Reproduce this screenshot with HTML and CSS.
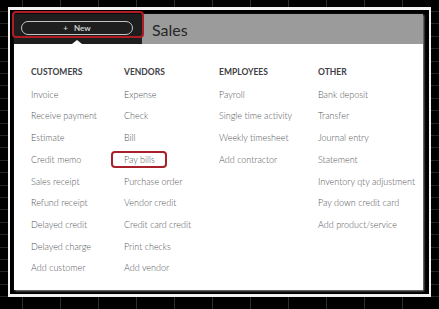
FILE: index.html
```html
<!DOCTYPE html>
<html>
<head>
    <meta charset="utf-8">
    <title>Sales - New</title>
    <link rel="stylesheet" href="styles.css">
</head>
<body>
    <div class="frame">
        <div class="screen">
            <div class="topbar">
                <div class="new-area">
                    <div class="new-pill"><span class="plus">+</span> New</div>
                    <div class="new-mark"></div>
                    <div class="caret"></div>
                </div>
                <div class="page-title">Sales</div>
            </div>

            <div class="menu">
                <div class="col">
                    <h3>CUSTOMERS</h3>
                    <a>Invoice</a>
                    <a>Receive payment</a>
                    <a>Estimate</a>
                    <a>Credit memo</a>
                    <a>Sales receipt</a>
                    <a>Refund receipt</a>
                    <a>Delayed credit</a>
                    <a>Delayed charge</a>
                    <a>Add customer</a>
                </div>
                <div class="col">
                    <h3>VENDORS</h3>
                    <a>Expense</a>
                    <a>Check</a>
                    <a>Bill</a>
                    <a><span class="marked">Pay bills</span></a>
                    <a>Purchase order</a>
                    <a>Vendor credit</a>
                    <a>Credit card credit</a>
                    <a>Print checks</a>
                    <a>Add vendor</a>
                </div>
                <div class="col">
                    <h3>EMPLOYEES</h3>
                    <a>Payroll</a>
                    <a>Single time activity</a>
                    <a>Weekly timesheet</a>
                    <a>Add contractor</a>
                </div>
                <div class="col">
                    <h3>OTHER</h3>
                    <a>Bank deposit</a>
                    <a>Transfer</a>
                    <a>Journal entry</a>
                    <a>Statement</a>
                    <a>Inventory qty adjustment</a>
                    <a>Pay down credit card</a>
                    <a>Add product/service</a>
                </div>
            </div>
        </div>
    </div>
</body>
</html>
```

FILE: styles.css
```css
html, body {
    margin: 0;
    height: 100%;
}

body {
    padding: 7px 8px;
    box-sizing: border-box;
    background-color: #000;
    background-image:
        repeating-linear-gradient(90deg, transparent 0, transparent 22px, #2e2e2e 22px, #2e2e2e 23px, transparent 23px, transparent 38px),
        repeating-linear-gradient(180deg, transparent 0, transparent 11px, #242424 11px, #242424 12px, transparent 12px, transparent 12.4px);
    font-family: Lato, "Liberation Sans", sans-serif;
}

.frame {
    width: 423px;
    height: 290px;
    box-sizing: border-box;
    border-style: solid;
    border-color: #f2f2f2;
    border-width: 3px 2px 3px 2px;
    padding: 4px 6px 4px 4px;
    background: #000;
}

.screen {
    height: 100%;
    display: flex;
    flex-direction: column;
    background: #fff;
    box-shadow: 1px 1px 2px rgba(160, 160, 160, 0.9);
}

.topbar {
    display: flex;
    height: 30px;
    flex-shrink: 0;
}

.new-area {
    position: relative;
    width: 128px;
    background: #1e1e1e;
}

.new-pill {
    margin: 7px 0 0 7px;
    width: 110px;
    height: 12px;
    border: 1px solid #c4c4c4;
    border-radius: 8px;
    color: #d0d0d0;
    font-size: 8px;
    font-weight: bold;
    line-height: 12px;
    text-align: center;
}

.new-pill .plus {
    margin-right: 4px;
}

/* red annotation around the New button */
.new-mark {
    position: absolute;
    left: -2px;
    top: -3px;
    width: 128px;
    height: 23px;
    border: 2px solid #b01c24;
    border-radius: 4px;
}

.caret {
    position: absolute;
    left: 58px;
    bottom: 0;
    width: 0;
    height: 0;
    border-left: 5px solid transparent;
    border-right: 5px solid transparent;
    border-bottom: 4px solid #fff;
}

.page-title {
    flex: 1;
    background: #9b9b9b;
    color: #262626;
    font-size: 16px;
    padding-left: 10px;
    line-height: 32px;
}

.menu {
    display: grid;
    grid-template-columns: 93px 95px 99px auto;
    padding: 18px 0 0 17px;
}

.col {
    display: flex;
    flex-direction: column;
}

.col h3 {
    margin: 0;
    font-size: 8.5px;
    font-weight: bold;
    color: #404145;
    line-height: 21.7px;
}

.col a {
    font-size: 9px;
    font-weight: 300;
    color: #55565b;
    line-height: 21.7px;
    white-space: nowrap;
}

/* red annotation around Pay bills */
.marked {
    display: inline-block;
    margin-left: -13px;
    padding: 0 10px 0 11px;
    height: 13px;
    line-height: 13px;
    border: 2px solid #a8202a;
    border-radius: 4px;
}
```
